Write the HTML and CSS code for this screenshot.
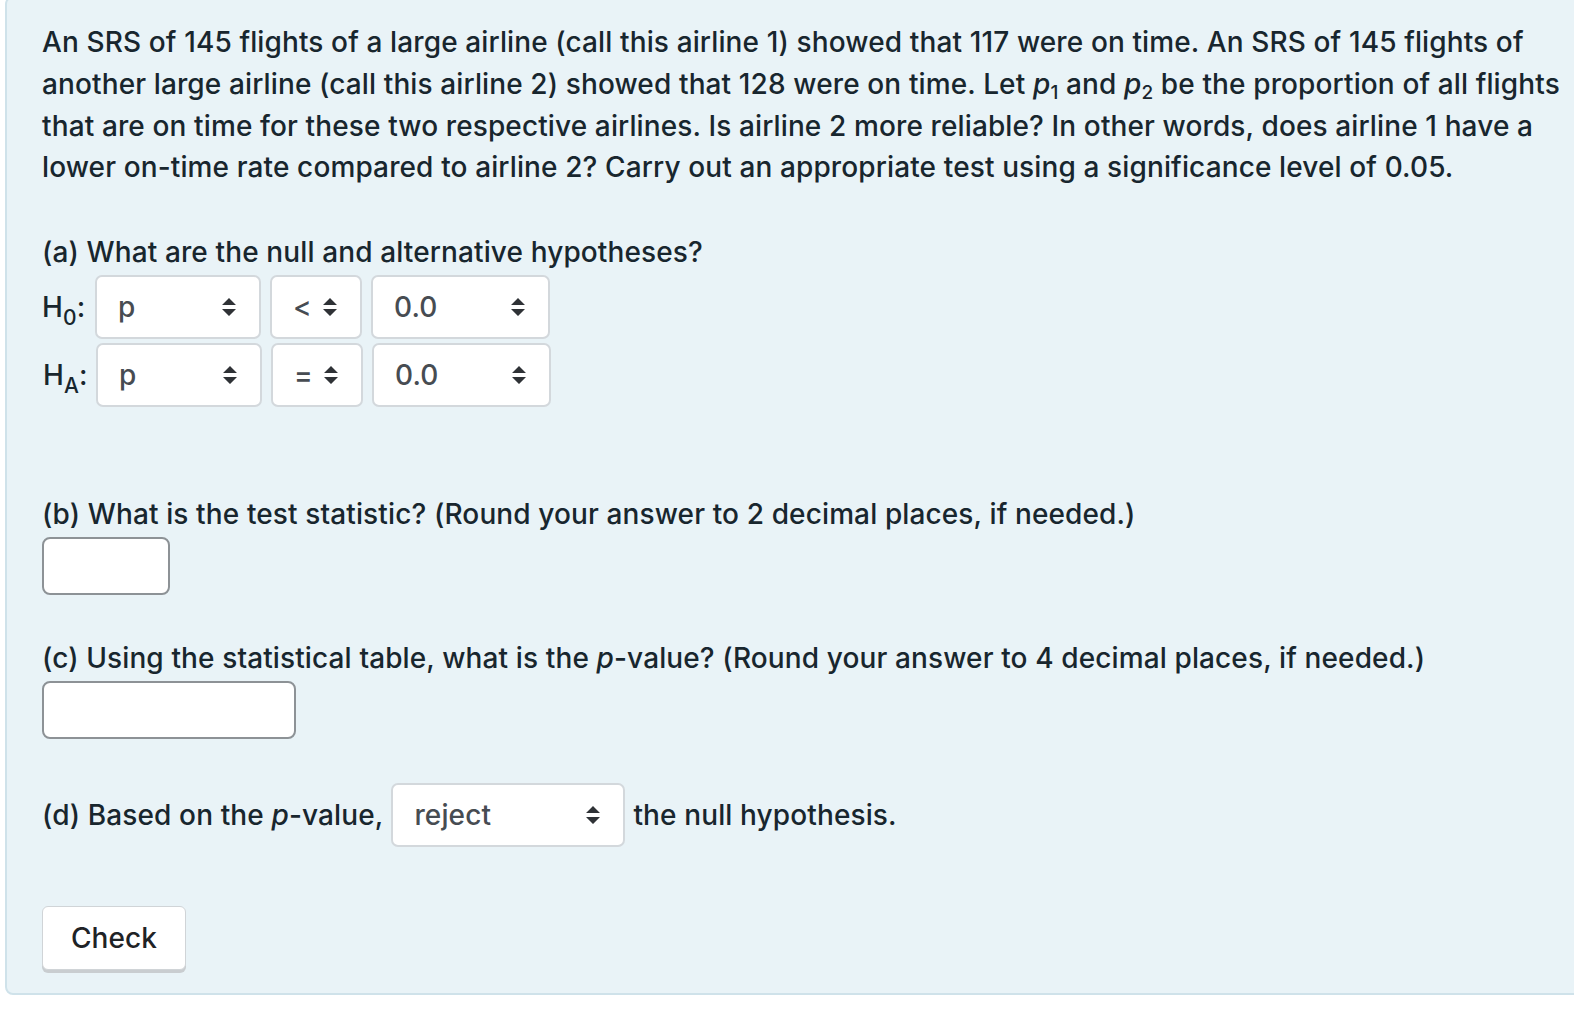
FILE: index.html
```html
<!DOCTYPE html>
<html>
<head>
<meta charset="utf-8">
<link rel="stylesheet" href="styles.css">
</head>
<body>
<div class="panel">
  <p class="intro">An SRS of 145 flights of a large airline (call this airline 1) showed that 117 were on time. An SRS of 145 flights of<br>another large airline (call this airline 2) showed that 128 were on time. Let <i>p</i><sub>1</sub> and <i>p</i><sub>2</sub> be the proportion of all flights<br>that are on time for these two respective airlines. Is airline 2 more reliable? In other words, does airline 1 have a<br>lower on-time rate compared to airline 2? Carry out an appropriate test using a significance level of 0.05.</p>

  <p class="q qa">(a) What are the null and alternative hypotheses?</p>
  <div class="hyp">
    <span class="hlabel">H<sub>0</sub>:</span>
    <div class="sel w-p"><span>p</span><svg class="arr" viewBox="0 0 16 20"><path d="M8 1 L15 8 H1 Z M1 12 H15 L8 19 Z"/></svg></div>
    <div class="sel w-op"><span>&lt;</span><svg class="arr" viewBox="0 0 16 20"><path d="M8 1 L15 8 H1 Z M1 12 H15 L8 19 Z"/></svg></div>
    <div class="sel w-v"><span>0.0</span><svg class="arr" viewBox="0 0 16 20"><path d="M8 1 L15 8 H1 Z M1 12 H15 L8 19 Z"/></svg></div>
  </div>
  <div class="hyp hyp2">
    <span class="hlabel">H<sub>A</sub>:</span>
    <div class="sel w-p"><span>p</span><svg class="arr" viewBox="0 0 16 20"><path d="M8 1 L15 8 H1 Z M1 12 H15 L8 19 Z"/></svg></div>
    <div class="sel w-op"><span>=</span><svg class="arr" viewBox="0 0 16 20"><path d="M8 1 L15 8 H1 Z M1 12 H15 L8 19 Z"/></svg></div>
    <div class="sel w-v"><span>0.0</span><svg class="arr" viewBox="0 0 16 20"><path d="M8 1 L15 8 H1 Z M1 12 H15 L8 19 Z"/></svg></div>
  </div>

  <p class="q qb">(b) What is the test statistic? (Round your answer to 2 decimal places, if needed.)</p>
  <div class="inp inp-b"></div>

  <p class="q qc">(c) Using the statistical table, what is the <i>p</i>-value? (Round your answer to 4 decimal places, if needed.)</p>
  <div class="inp inp-c"></div>

  <div class="qd">
    <span>(d) Based on the <i>p</i>-value,</span>
    <div class="sel w-r"><span>reject</span><svg class="arr" viewBox="0 0 16 20"><path d="M8 1 L15 8 H1 Z M1 12 H15 L8 19 Z"/></svg></div>
    <span>the null hypothesis.</span>
  </div>

  <button class="check">Check</button>
</div>
</body>
</html>
```
FILE: styles.css
```css
html, body {
  margin: 0;
  padding: 0;
  background: #ffffff;
  overflow: hidden;
}
body {
  font-family: Inter, "Liberation Sans", sans-serif;
  color: #18262e;
  font-size: 28px;
  letter-spacing: 0.12px;
  font-weight: 500;
}
.panel {
  margin: -4px -40px 0 5px;
  background: #e9f3f7;
  border: 2px solid #cfe2ea;
  border-radius: 8px;
  padding: 24px 40px 23px 35px;
  display: flex;
  flex-direction: column;
  align-items: flex-start;
}
p { margin: 0; }
.intro {
  line-height: 41.8px;
}
.intro i, .q i, .qd i {
  font-style: italic;
}
sub {
  font-size: 19px;
  line-height: 0;
  vertical-align: -5px;
}
.q { line-height: 42px; }
.qa { margin-top: 42px; }
.hyp {
  display: flex;
  align-items: center;
  gap: 9px;
  margin-top: 2px;
}
.hyp2 { margin-top: 4px; margin-left: 1px; }
.hlabel {
  width: 44px;
  flex: none;
}
.hlabel sub { font-size: 21px; vertical-align: -8px; }
.sel {
  box-sizing: border-box;
  height: 64px;
  background: #ffffff;
  border: 2px solid #d3d8dc;
  border-radius: 7px;
  display: flex;
  align-items: center;
  justify-content: space-between;
  padding: 0 22px 0 21px;
  color: #474c52;
  font-weight: 500;
  flex: none;
}
.arr {
  width: 16px;
  height: 20px;
  fill: #2f3236;
}
.w-p { width: 166px; }
.w-op { width: 92px; }
.w-v { width: 179px; }
.w-r { width: 234px; }
.qb { margin-top: 86px; }
.inp {
  box-sizing: border-box;
  height: 58px;
  background: #ffffff;
  border: 2px solid #8d9296;
  border-radius: 8px;
  margin-top: 2px;
}
.inp-b { width: 128px; }
.inp-c { width: 254px; }
.qc { margin-top: 42px; }
.qd {
  margin-top: 44px;
  display: flex;
  align-items: center;
  gap: 8px;
}
.check {
  margin-top: 59px;
  font-family: inherit;
  font-size: 28px;
  letter-spacing: 0.12px;
  font-weight: 500;
  color: #1f2326;
  background: #ffffff;
  border: 1.5px solid #d0d4d7;
  border-radius: 6px;
  box-shadow: 0 3px 0 #c9cdd0;
  width: 144px;
  height: 64px;
  padding: 0;
  cursor: pointer;
}
```
